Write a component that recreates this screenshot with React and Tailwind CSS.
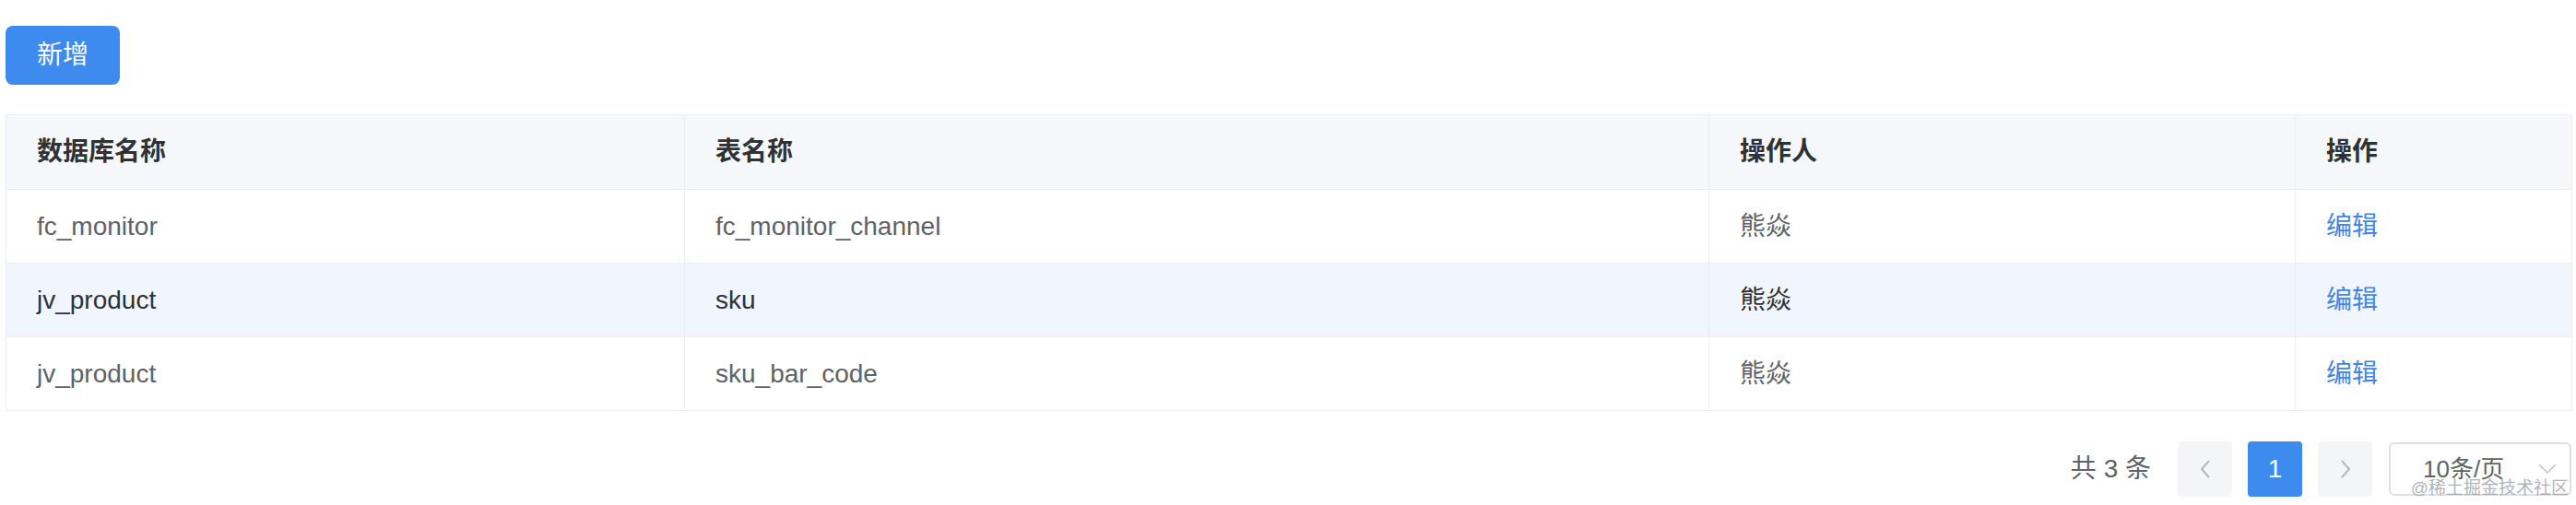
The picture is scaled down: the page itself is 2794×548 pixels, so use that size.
import React from "react";

const rows = [
  { db: "fc_monitor", table: "fc_monitor_channel", user: "熊焱" },
  { db: "jv_product", table: "sku", user: "熊焱", hover: true },
  { db: "jv_product", table: "sku_bar_code", user: "熊焱" },
];

const font = { fontFamily: '"Liberation Sans", "Noto Sans CJK SC", sans-serif' };

const App = () => {
  return (
    <div
      className="relative w-[2794px] h-[548px] bg-white pl-[6px] pr-[5px] pt-[28px]"
      style={font}
    >
      <button className="w-[124px] h-[64px] rounded-[8px] bg-[#3e8bf0] text-white text-[28px] leading-none">
        新增
      </button>

      {/* table */}
      <table className="mt-[32px] w-[2783px] table-fixed border-collapse border border-[#ebeef5] text-[28px]">
        <colgroup>
          <col className="w-[736px]" />
          <col className="w-[1111px]" />
          <col className="w-[636px]" />
          <col className="w-[300px]" />
        </colgroup>
        <thead>
          <tr className="h-[81px] bg-[#f5f7fa]">
            {["数据库名称", "表名称", "操作人", "操作"].map((h) => (
              <th
                key={h}
                className="border border-[#ebeef5] px-[33px] text-left font-bold text-[#303133]"
              >
                {h}
              </th>
            ))}
          </tr>
        </thead>
        <tbody>
          {rows.map((r, i) => (
            <tr
              key={i}
              className={`h-[80px] ${
                r.hover ? "bg-[#f0f5fe] text-[#303133]" : "bg-white text-[#606266]"
              }`}
            >
              <td className="border border-[#ebeef5] px-[33px]">{r.db}</td>
              <td className="border border-[#ebeef5] px-[33px]">{r.table}</td>
              <td className="border border-[#ebeef5] px-[33px]">{r.user}</td>
              <td className="border border-[#ebeef5] px-[33px] text-[#4185e6]">编辑</td>
            </tr>
          ))}
        </tbody>
      </table>

      {/* pagination */}
      <div className="mt-[33px] flex items-center justify-end text-[#606266]">
        <span className="mr-[29px] text-[28px]">共 3 条</span>
        <div className="flex items-center gap-[17px]">
          <button className="w-[59px] h-[60px] rounded-[4px] bg-[#f4f5f7] flex items-center justify-center">
            <svg width="14" height="24" viewBox="0 0 14 24" fill="none">
              <path d="M11 3 L3 12 L11 21" stroke="#b4b7bd" strokeWidth="2" />
            </svg>
          </button>
          <button className="w-[59px] h-[60px] rounded-[4px] bg-[#3e8bf0] text-white text-[28px]">
            1
          </button>
          <button className="w-[59px] h-[60px] rounded-[4px] bg-[#f4f5f7] flex items-center justify-center">
            <svg width="14" height="24" viewBox="0 0 14 24" fill="none">
              <path d="M3 3 L11 12 L3 21" stroke="#b4b7bd" strokeWidth="2" />
            </svg>
          </button>
        </div>
        <div className="ml-[18px] w-[198px] h-[58px] rounded-[6px] border-2 border-[#dcdfe6] flex items-center pl-[35px] pr-[14px]">
          <span className="text-[26px] flex-1">10条/页</span>
          <svg width="20" height="12" viewBox="0 0 20 12" fill="none">
            <path d="M1 1 L10 10 L19 1" stroke="#c0c4cc" strokeWidth="1.5" />
          </svg>
        </div>
      </div>

      <span className="absolute right-[8px] bottom-[9px] text-[19px] leading-none text-[#9aa0a8]/80">
        @稀土掘金技术社区
      </span>
    </div>
  );
};

export default App;
